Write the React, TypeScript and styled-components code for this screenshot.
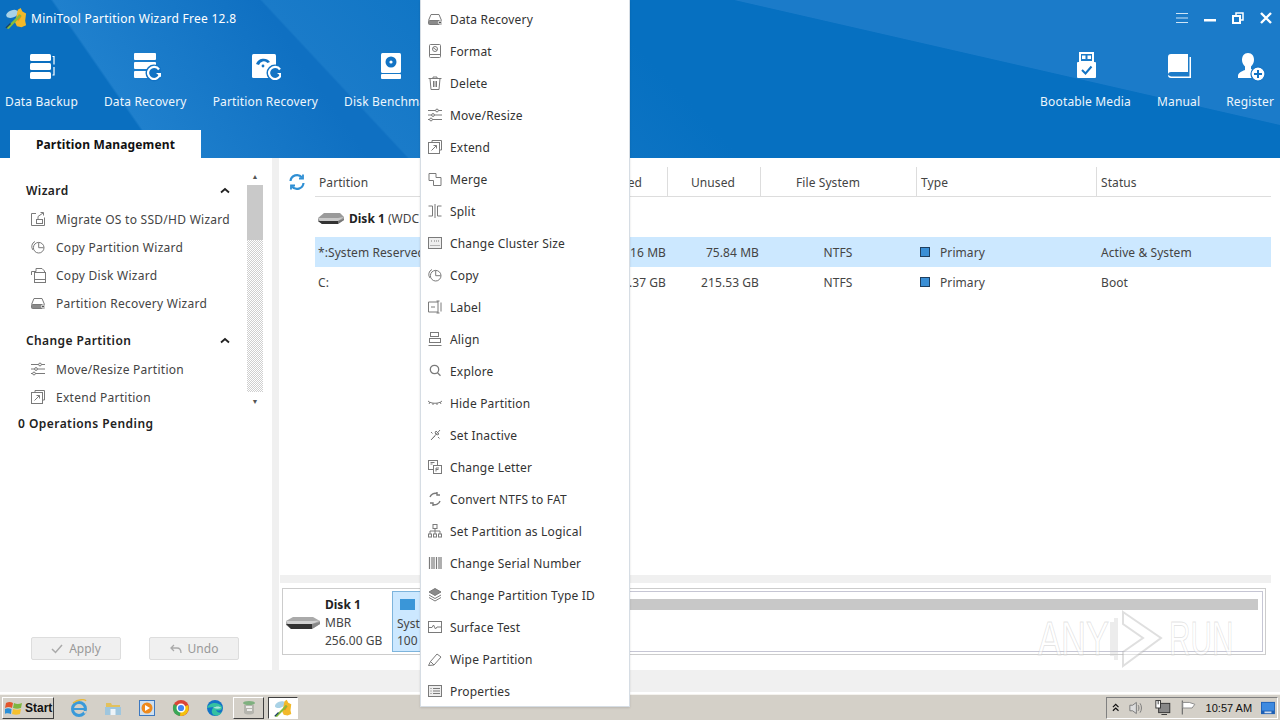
import React from "react";
import styled, { createGlobalStyle } from "styled-components";

const Global = createGlobalStyle`
  html, body { margin: 0; padding: 0; width: 1280px; height: 720px; overflow: hidden; background: #fff; }
  * { box-sizing: border-box; }
  body { font-family: "Noto Sans", "Open Sans", Arial, sans-serif; font-size: 12px; color: #333; }
`;

const Page = styled.div`
  position: relative;
  width: 1280px;
  height: 720px;
  display: flex;
  flex-direction: column;
  overflow: hidden;
`;
const Window = styled.div`
  height: 694px;
  display: flex;
  flex-direction: column;
  background: #fff;
`;
const Header = styled.header`
  height: 158px;
  display: flex;
  flex-direction: column;
  color: #fff;
  background:
    linear-gradient(12.9deg, transparent 72.2%, #1b7bc9 72.4%),
    linear-gradient(47deg, transparent 28.5%, #1a7bc9 28.7%, #0670c1 52%),
    linear-gradient(55.3deg, transparent 11.5%, #1f80cd 11.7%, #0f70c2 26.6%),
    #0a6fc0;
`;
const TitleBar = styled.div`
  height: 36px;
  display: flex;
  align-items: center;
  padding: 0 8px 0 5px;
`;
const AppTitle = styled.div`
  flex: 1;
  margin-left: 4px;
  font-size: 12px;
  letter-spacing: 0.27px;
`;
const WinControls = styled.div`
  display: flex;
  gap: 16px;
  align-items: center;
`;
const Tools = styled.div`
  flex: 1;
  display: flex;
  gap: 26px;
  padding: 0 6px 0 5px;
`;
const RightTools = styled.div`
  margin-left: auto;
  display: flex;
  gap: 26px;
`;
const Tool = styled.div`
  display: flex;
  flex-direction: column;
  align-items: center;
  padding-top: 14px;
  white-space: nowrap;
  font-size: 12px;
  letter-spacing: 0.16px;
  color: #eef6fc;
  svg { margin-bottom: 11px; display: block; }
`;
const TabRow = styled.div`
  height: 28px;
  padding-left: 10px;
`;
const Tab = styled.div`
  width: 191px;
  height: 28px;
  padding-top: 1px;
  background: #fff;
  color: #111;
  font-weight: 700;
  font-size: 12px;
  letter-spacing: 0.15px;
  display: flex;
  align-items: center;
  justify-content: center;
`;
const Body = styled.div`
  flex: 1;
  display: flex;
  min-height: 0;
`;
const Sidebar = styled.aside`
  width: 279px;
  border-right: 7px solid #f0f0f0;
  display: flex;
  flex-direction: column;
`;
const SideScroll = styled.div`
  height: 252px;
  display: flex;
  padding: 9px 9px 0 0;
`;
const SideContent = styled.div`
  flex: 1;
  padding: 13px 12px 0 26px;
`;
const SectionHead = styled.div`
  height: 20px;
  display: flex;
  align-items: center;
  justify-content: space-between;
  font-weight: 600;
  color: #222;
  font-size: 12px;
  letter-spacing: 0.4px;
  margin-bottom: 5px;
  &:not(:first-child) { margin-top: 13px; }
`;
const SideItem = styled.div`
  height: 28px;
  display: flex;
  align-items: center;
  gap: 10px;
  color: #444;
  padding-left: 4px;
  white-space: nowrap;
  letter-spacing: 0.27px;
`;
const ScrollBar = styled.div`
  width: 16px;
  display: flex;
  flex-direction: column;
  align-items: center;
`;
const ScrollBtn = styled.div`
  height: 18px;
  display: flex;
  align-items: center;
  justify-content: center;
  color: #555;
  font-size: 7px;
`;
const Track = styled.div`
  flex: 1;
  width: 16px;
  background: repeating-conic-gradient(#cfcfcf 0 25%, #fff 0 50%) 0 0 / 2px 2px;
`;
const Thumb = styled.div`
  height: 55px;
  background: #c9c9c9;
`;
const Pending = styled.div`
  padding-left: 18px;
  margin-top: 5px;
  font-weight: 600;
  color: #222;
  letter-spacing: 0.45px;
`;
const Actions = styled.div`
  margin-top: auto;
  display: flex;
  gap: 28px;
  padding: 0 0 10px 31px;
`;
const ActionBtn = styled.div`
  width: 90px;
  height: 23px;
  background: #f0f0f0;
  border: 1px solid #ddd;
  border-radius: 2px;
  color: #999;
  display: flex;
  align-items: center;
  justify-content: center;
  gap: 6px;
`;
const Main = styled.main`
  flex: 1;
  min-width: 0;
  display: flex;
  flex-direction: column;
`;
const TableArea = styled.div`
  flex: 1;
  display: flex;
  padding: 9px 9px 0 0;
`;
const RefreshCol = styled.div`
  width: 36px;
  padding: 6px 0 0 9px;
`;
const Table = styled.div`
  flex: 1;
  min-width: 0;
`;
const Row = styled.div<{ $selected?: boolean }>`
  display: grid;
  grid-template-columns: 150px 110px 93px 93px 156px 180px 1fr;
  height: 30px;
  padding-top: 1px;
  align-items: center;
  color: #444;
  letter-spacing: 0.08px;
  background: ${(p) => (p.$selected ? "#cce8ff" : "transparent")};
`;
const HeadRow = styled(Row)`
  height: 30px;
  padding-top: 0;
  border-bottom: 1px solid #ddd;
`;
const HeadCell = styled.div<{ $pl?: number; $pr?: number; $right?: boolean; $sep?: boolean }>`
  height: 100%;
  display: flex;
  align-items: center;
  justify-content: ${(p) => (p.$right ? "flex-end" : "flex-start")};
  padding: 2px ${(p) => p.$pr ?? 0}px 0 ${(p) => p.$pl ?? 0}px;
  border-right: ${(p) => (p.$sep ? "1px solid #ddd" : "none")};
  white-space: nowrap;
`;
const Cell = styled.div<{ $align?: string; $pl?: number }>`
  text-align: ${(p) => p.$align ?? "left"};
  padding: 0 2px 0 ${(p) => p.$pl ?? 0}px;
  white-space: nowrap;
`;
const TypeSwatch = styled.span`
  display: inline-block;
  width: 10px;
  height: 10px;
  background: #3a8fd6;
  border: 1px solid #1f3f5f;
  margin: 0 10px 0 0;
  vertical-align: 0;
`;
const DiskRow = styled.div`
  height: 40px;
  padding: 2px 0 0 3px;
  display: flex;
  align-items: center;
  gap: 5px;
  color: #444;
`;
const Strong = styled.span`
  font-weight: 700;
  color: #222;
`;
const MapBand = styled.div`
  height: 8px;
  margin: 0 9px 0 1px;
  background: #f0f0f0;
`;
const DiskMap = styled.div`
  height: 67px;
  margin: 5px 14px 15px 3px;
  border: 1px solid #ccc;
  display: flex;
  align-items: stretch;
  padding: 2px 2px 2px 0;
`;
const DiskInfo = styled.div`
  width: 109px;
  display: flex;
  align-items: center;
  padding: 3px 0 0 3px;
  gap: 5px;
  line-height: 18px;
  color: #444;
`;
const PartBlock = styled.div<{ $selected?: boolean }>`
  flex: ${(p) => (p.$selected ? "0 0 50px" : "1")};
  border: 1px solid ${(p) => (p.$selected ? "#7db4dc" : "#c6c6d4")};
  background: ${(p) => (p.$selected ? "#cce8ff" : "#fff")};
  padding: 7px 7px 0 4px;
  line-height: 17px;
  color: #444;
  overflow: hidden;
  white-space: nowrap;
`;
const PartBar = styled.div<{ $color: string; $w?: string }>`
  height: 11px;
  width: ${(p) => p.$w ?? "100%"};
  background: ${(p) => p.$color};
  margin: 0 0 5px 3px;
`;
const Footer = styled.div`
  height: 24px;
  background: #f0f0f0;
  border-bottom: 2px solid #fff;
`;
const Taskbar = styled.footer`
  height: 26px;
  background: #d4d0c8;
  border-top: 1px solid #f4f2ee;
  display: flex;
  align-items: center;
  padding: 0 2px;
`;
const StartBtn = styled.div`
  width: 52px;
  height: 22px;
  background: #d4d0c8;
  border: 1px solid;
  border-color: #fff #404040 #404040 #fff;
  display: flex;
  align-items: center;
  gap: 2px;
  padding-left: 2px;
  font-family: "Liberation Sans", Arial, sans-serif;
  font-weight: 700;
  font-size: 12px;
  color: #111;
`;
const QuickLaunch = styled.div`
  display: flex;
  align-items: center;
  margin-left: 8px;
`;
const TaskIcon = styled.div<{ $state?: "raised" | "active" }>`
  width: ${(p) => (p.$state === "raised" ? "31px" : p.$state === "active" ? "30px" : "34px")};
  height: 22px;
  display: flex;
  align-items: center;
  justify-content: center;
  margin-left: ${(p) => (p.$state === "raised" ? "1px" : p.$state === "active" ? "4px" : "0")};
  background: ${(p) => (p.$state === "active" ? "#fff" : "transparent")};
  border: ${(p) => (p.$state ? "1px solid" : "none")};
  border-color: ${(p) => (p.$state === "active" ? "#404040 #fff #fff #404040" : "#fff #404040 #404040 #fff")};
`;
const Tray = styled.div`
  margin-left: auto;
  width: 172px;
  height: 22px;
  border: 1px solid;
  border-color: #808080 #fff #fff #808080;
  display: flex;
  align-items: center;
  padding: 0 2px 0 5px;
  gap: 9px;
  font-family: "Liberation Sans", Arial, sans-serif;
  font-size: 11px;
  color: #111;
`;
const Clock = styled.span`
  margin-left: auto;
  white-space: nowrap;
`;
const Menu = styled.div`
  position: absolute;
  left: 420px;
  top: 0;
  width: 210px;
  height: 707px;
  padding-top: 3px;
  background: #fff;
  border: 1px solid #d6dde4;
  border-top: none;
  box-shadow: 0 1px 2px rgba(0, 0, 0, 0.12);
`;
const MenuItem = styled.div`
  height: 32px;
  display: flex;
  align-items: center;
  padding-left: 6px;
  gap: 7px;
  color: #333;
  white-space: nowrap;
  letter-spacing: 0.18px;
`;
const Watermark = styled.div`
  position: absolute;
  left: 1038px;
  top: 610px;
  display: flex;
  align-items: center;
  font-family: "Liberation Sans", Arial, sans-serif;
  font-size: 48px;
  line-height: 58px;
  color: rgba(255, 255, 255, 0.5);
  -webkit-text-stroke: 1px rgba(170, 170, 170, 0.32);
  pointer-events: none;
`;
const WmWord = styled.span<{ $w: number; $sx: number }>`
  display: block;
  width: ${(p) => p.$w}px;
  white-space: nowrap;
  transform: scaleX(${(p) => p.$sx});
  transform-origin: left center;
`;

const S = { fill: "none", stroke: "#7a7a7a", strokeWidth: 1 } as const;

const icons: Record<string, React.ReactNode> = {
  drive: <g {...S}><path d="M1.5 9.5 4 3.5h8l2.5 6" /><rect x="1.5" y="9.5" width="13" height="4" rx="1" fill="#8a8a8a" /><circle cx="13" cy="11.5" r="1.6" fill="#555" stroke="#fff" /></g>,
  format: <g {...S}><rect x="2.5" y="1.5" width="11" height="13" rx="1" /><circle cx="8" cy="6" r="2.5" /><path d="M6 4.5 10 7.5M2.5 11.5h11" /></g>,
  trash: <g {...S}><path d="M1.5 3.5h13M6 3.5V2h4v1.5M3 3.5l1 11h8l1-11M6.5 6v6M8 6v6M9.5 6v6" /></g>,
  sliders: <g {...S}><path d="M1 3.5h14M1 8h14M1 12.5h14" /><circle cx="10" cy="3.5" r="1.4" fill="#fff" /><circle cx="6" cy="8" r="1.4" fill="#fff" /><circle cx="4" cy="12.5" r="1.4" fill="#fff" /></g>,
  extend: <g {...S}><path d="M5 3.5V1.5h9.500v9.500H12.500" /><rect x="1.5" y="3.5" width="11" height="11" /><path d="M4.5 11.500 9.500 6.500M6.500 6.500h3v3" /></g>,
  merge: <g {...S}><path d="M2 2.5h7v4h5v8H6.500v-5H2z" /></g>,
  split: <g {...S}><path d="M8 1v14M1.500 3h4v10h-4M14.500 3h-4v10h4" /></g>,
  cluster: <g {...S}><rect x="1.5" y="2.5" width="13" height="11" fill="#eee" /><path d="M4 6h1M7 6h5M3.500 10.500h9" strokeDasharray="1 1" /></g>,
  copy: <g {...S}><path d="M5 2.500A5.500 5.500 0 0 0 3 11" /><circle cx="8.700" cy="8.700" r="5.300" /><path d="M8.700 3.500v5.200h5" /></g>,
  label: <g {...S}><path d="M11 3H1.500v10H11M4 8h4M11 2v12M9.500 2h3M9.500 14h3M14 3.500v9" /></g>,
  align: <g {...S}><path d="M1.500 14.500h13" /><rect x="3.500" y="1.500" width="8" height="4" /><rect x="2.500" y="7.500" width="11" height="4" /></g>,
  explore: <g {...S} strokeWidth={1.3}><circle cx="7.500" cy="6.500" r="4.200" /><path d="m10.500 9.800 3 3" /></g>,
  hide: <g {...S}><path d="M1 6c3 3 11 3 14 0M3 7 2 9M6 8v2M10 8v2M13 7l1 2" /></g>,
  inactive: <g {...S}><path d="m5 12 3-3M9 4l3 3-2 1-2-2zM4 5l1.500 1.500M11 10l1.500 1.500M4 13 13 3" /></g>,
  letter: <g {...S}><rect x="1.500" y="1.500" width="9" height="9" /><rect x="6.500" y="6.500" width="8" height="8" fill="#fff" /><path d="M3.500 3.500h4M3.500 5h2M9 9h3M9 9v3.500M9 10.500h2.500" /></g>,
  convert: <g {...S} strokeWidth={1.4}><path d="M3 6a5.500 5.500 0 0 1 7-3.500M13 10a5.500 5.500 0 0 1-7 3.500M10 1v3h3M6 15v-3H3" /></g>,
  logical: <g {...S}><rect x="6" y="1.500" width="4" height="4" /><path d="M8 5.500V8M3 11V8h10v3M8 8v3" /><rect x="1.500" y="11" width="3" height="3" /><rect x="6.500" y="11" width="3" height="3" /><rect x="11.500" y="11" width="3" height="3" /></g>,
  serial: <g {...S}><path d="M2.500 2v12M5 2v12M7 2v12M9.500 2v12M12 2v12M14 2v12" strokeWidth={1.2} /></g>,
  layers: <g {...S}><path d="M8 1.500 14 5l-6 3.500L2 5z" fill="#8a8a8a" /><path d="m2 8 6 3.500L14 8M2 10.500 8 14l6-3.500" /></g>,
  surface: <g {...S}><rect x="1.500" y="2.500" width="13" height="11" /><path d="M2 8.500h3l1.500-2.500 2 4 1.500-2h4" /></g>,
  wipe: <g {...S}><path d="m1.500 14.500 2-4L10 3l4 3-7 8z M3.500 10.500 7 14" /></g>,
  props: <g {...S}><rect x="1.500" y="2.500" width="13" height="11" fill="#eee" /><path d="M3.500 5.500h1M6 5.500h7M3.500 8h1M6 8h7M3.500 10.500h1M6 10.500h7" /></g>,
  migrate: <g {...S}><path d="M6 2.500H1.500v12h13v-8" /><rect x="6.500" y="8.500" width="6" height="4" /><path d="M8 8V5.500L13 2M10.500 1.500H13.500V4.500" /></g>,
  copydisk: <g {...S}><path d="M6 4.500V1.500h6l2.500 2.500v4M1.500 8V4.500H6" /><rect x="4.500" y="5.500" width="11" height="10" fill="#fff" /><path d="M4.500 12.500h11" /></g>,
};

const Ico = ({ n, w = 16 }: { n: string; w?: number }) => (
  <svg width={w} height={16} viewBox="0 0 16 16" style={{ flex: "none" }}>{icons[n]}</svg>
);

const W = "#fff";
const B = "#1273c4";

const BigIcon = ({ children }: { children: React.ReactNode }) => (
  <svg width="32" height="32" viewBox="0 0 32 32">{children}</svg>
);

const refreshC = (cx: number, cy: number) => (
  <g>
    <circle cx={cx} cy={cy} r="8.500" fill={B} />
    <path d={`M${cx + 5} ${cy - 3.5}A6 6 0 1 0 ${cx + 6} ${cy + 1}`} fill="none" stroke={W} strokeWidth="2.200" />
    <path d={`M${cx + 2} ${cy}h6v5z`} fill={W} />
  </g>
);

const BackupIcon = () => (
  <BigIcon>
    <rect x="5" y="4" width="21" height="7" rx="1.500" fill={W} />
    <rect x="5" y="13" width="21" height="7" rx="1.500" fill={W} />
    <rect x="5" y="22" width="21" height="7" rx="1.500" fill={W} />
    <path d="M27.500 6.500h1.500v8M29 17v8h-1.500" stroke={W} fill="none" strokeWidth="1.200" />
  </BigIcon>
);
const RecoveryIcon = () => (
  <BigIcon>
    <rect x="5" y="3" width="22" height="7" rx="1" fill={W} />
    <rect x="5" y="12" width="22" height="7" rx="1" fill={W} />
    <rect x="5" y="21" width="14" height="7" rx="1" fill={W} />
    {refreshC(25, 23)}
  </BigIcon>
);
const PartRecIcon = () => (
  <BigIcon>
    <rect x="3" y="4" width="24" height="24" rx="1.500" fill={W} />
    <path d="M7 14a8 8 0 0 1 14-2l-2.500 1a5 5 0 0 0-8.500 2z" fill={B} />
    <circle cx="14" cy="16" r="1.400" fill={B} />
    {refreshC(26, 23)}
  </BigIcon>
);
const BenchIcon = () => (
  <BigIcon>
    <rect x="6" y="3" width="20" height="20" rx="1.500" fill={W} />
    <rect x="6" y="24" width="20" height="5" rx="1" fill={W} />
    <circle cx="16" cy="12" r="5.500" fill={B} />
    <circle cx="16" cy="12" r="1.600" fill={W} />
  </BigIcon>
);
const UsbIcon = () => (
  <BigIcon>
    <path d="M10 3h13v9H10z" fill="none" stroke={W} strokeWidth="2" />
    <rect x="12" y="5.500" width="3.500" height="3.500" fill={W} />
    <rect x="17.500" y="5.500" width="3.500" height="3.500" fill={W} />
    <rect x="7" y="12" width="19" height="16" rx="1" fill={W} />
    <path d="m12 20 3.500 3.500 6-7" fill="none" stroke={B} strokeWidth="2" />
  </BigIcon>
);
const BookIcon = () => (
  <BigIcon>
    <path d="M5 7a3 3 0 0 1 3-3h17v18H8a3 3 0 0 0-3 3z" fill={W} />
    <path d="M5 25a3 3 0 0 0 3 3h20V7h-1.500v19.500H8" fill={W} />
  </BigIcon>
);
const RegisterIcon = () => (
  <BigIcon>
    <path d="M14 3c4 0 6 3 6 7 0 3-1.500 5-3 6.500V19l5 2.500V28H4v-2c0-3 3-4.500 7-6v-3.500C9.500 15 8 13 8 10c0-4 2-7 6-7z" fill={W} />
    <circle cx="24" cy="24" r="7" fill={W} stroke={B} strokeWidth="1.200" />
    <path d="M24 20v8M20 24h8" stroke={B} strokeWidth="2" />
  </BigIcon>
);

const Wand = ({ s = 24 }: { s?: number }) => (
  <svg width={s} height={s} viewBox="0 0 24 24">
    <ellipse cx="8" cy="7.500" rx="7" ry="4" fill="#a9d2e6" transform="rotate(-20 8 7.500)" />
    <path d="M14 3l3-2 2 4 4 2-1 8 1 5-5 2-5-1-2-4z" fill="#f2b92a" />
    <path d="M15 8l3 2-3 5-3-1z" fill="#e98b1b" />
    <path d="M1 23 16 8l2 1.500L4 24z" fill="#86bd3c" />
    <path d="M1 23l5-5" stroke="#1d3f63" strokeWidth="1.500" />
  </svg>
);

const HddSmall = () => (
  <svg width="26" height="13" viewBox="0 0 26 13">
    <path d="M0 6 6 1h16l4 4v3l-6 4H4L0 9z" fill="#9a9a9a" />
    <path d="M0 6h20l6-1-6 4H2z" fill="#c9c9c9" />
    <path d="M0 9h20v3H4z" fill="#333" />
    <path d="M20 9l6-2v1l-6 4z" fill="#777" />
  </svg>
);
const HddLarge = () => (
  <svg width="34" height="14" viewBox="0 0 34 14">
    <path d="M0 5 7 1h20l7 4v3l-8 5H5L0 9z" fill="#aaa" />
    <path d="M0 5h27l7-.5-8 3.500H2z" fill="#d2d2d2" />
    <path d="M0 8h26v5H5z" fill="#333" />
    <path d="M26 8l8-2v2l-8 5z" fill="#888" />
  </svg>
);

const Refresh = () => (
  <svg width="18" height="18" viewBox="0 0 18 18" fill="none" stroke="#2f8fd4" strokeWidth="2.200">
    <path d="M2.500 8A6.500 6.500 0 0 1 14 4.500" />
    <path d="M15.500 10A6.500 6.500 0 0 1 4 13.500" />
    <path d="M15 1.500v4h-4M3 16.500v-4h4" strokeWidth="1.800" />
  </svg>
);

const Chevron = () => (
  <svg width="10" height="7" viewBox="0 0 10 7" style={{ marginRight: 5 }}>
    <path d="M1 5.500 5 2l4 3.500" fill="none" stroke="#222" strokeWidth="1.800" />
  </svg>
);

const WinFlag = () => (
  <svg width="18" height="16" viewBox="0 0 18 16">
    <path d="M1 3c3-1.500 5-1 7 0l-1 5c-2-1-4-1.500-7 0z" fill="#e2552c" />
    <path d="M9 3c3 1.500 5 1 8 0l-1 5c-3 1-5 1-8 0z" fill="#7db640" />
    <path d="M0 9c2-1 4-1 6.500 0L6 14c-2-1-4-1-7 0z" fill="#2a8fd8" />
    <path d="M8 9c3 1 5 1 8 0l-1 5c-3 1-5 1-8 0z" fill="#f5c02c" />
  </svg>
);
const IeIcon = () => (
  <svg width="18" height="18" viewBox="0 0 18 18">
    <circle cx="9" cy="10" r="6.500" fill="none" stroke="#3a9ad9" strokeWidth="3" />
    <path d="M4 10h10" stroke="#3a9ad9" strokeWidth="2" />
    <path d="M13 12h4l-2 3z" fill="#d4d0c8" />
    <path d="M3 4c5-4 12-4 13-2" fill="none" stroke="#e8b83a" strokeWidth="1.400" />
  </svg>
);
const FolderIcon = () => (
  <svg width="18" height="18" viewBox="0 0 18 18">
    <path d="M2 4h5l1 2h8v3H2z" fill="#e3c15c" />
    <path d="M1 8h16v8H1z" fill="#9fc6de" />
    <rect x="6.500" y="10" width="5" height="6" fill="#eef4f8" />
  </svg>
);
const PlayerIcon = () => (
  <svg width="18" height="18" viewBox="0 0 18 18">
    <rect x="1.500" y="1.500" width="15" height="15" fill="#cfe0f0" stroke="#3c78c0" />
    <circle cx="9" cy="9" r="5.500" fill="#ef8a1c" />
    <path d="M7 6l5 3-5 3z" fill="#fff" />
  </svg>
);
const ChromeIcon = () => (
  <svg width="18" height="18" viewBox="0 0 18 18">
    <circle cx="9" cy="9" r="8" fill="#db4437" />
    <path d="M9 9 2 5A8 8 0 0 0 8 17z" fill="#3aa757" />
    <path d="M9 9l7-3A8 8 0 0 1 8 17z" fill="#f4c20d" />
    <circle cx="9" cy="9" r="3.800" fill="#4285f4" stroke="#fff" strokeWidth="1.400" />
  </svg>
);
const EdgeIcon = () => (
  <svg width="18" height="18" viewBox="0 0 18 18">
    <circle cx="9" cy="9" r="8" fill="#1373c6" />
    <path d="M1 9C3 3 13 2 16 8c1 3-3 4-6 3 1 2 4 4 6 2-2 4-6 4-8 3-3-1-3-6 0-8-3 0-6 1-7 1z" fill="#35c1a1" />
    <path d="M7 9c3-2 7-2 8 0-2 1-5 1-7 0z" fill="#fff" opacity=".6" />
  </svg>
);
const ThreeIcon = () => (
  <svg width="18" height="18" viewBox="0 0 18 18">
    <ellipse cx="9" cy="4" rx="6" ry="2" fill="#7fb07f" />
    <path d="M4 6h10v8c-2 2-8 2-10 0z" fill="#b5b5ae" />
    <path d="M6 8h6M7 11h5" stroke="#fff" strokeWidth="1.600" />
  </svg>
);
const Speaker = () => (
  <svg width="18" height="16" viewBox="0 0 18 16" fill="none" stroke="#777">
    <path d="M5 5H2v6h3l4 3V2z" fill="#ddd" />
    <path d="M11 5c1 2 1 4 0 6M13 3c2 3 2 7 0 10" />
  </svg>
);
const NetIcon = () => (
  <svg width="18" height="18" viewBox="0 0 18 18">
    <rect x="5" y="4" width="12" height="10" fill="#888" stroke="#333" />
    <path d="M8 16h6" stroke="#333" />
    <rect x="2" y="1" width="5" height="8" fill="#fff" stroke="#333" />
    <path d="M4.500 1v4" stroke="#333" />
  </svg>
);
const FlagIcon = () => (
  <svg width="18" height="18" viewBox="0 0 18 18">
    <path d="M2.500 1v15" stroke="#666" strokeWidth="1.200" />
    <path d="M3 3h7l6 2-3 4H3z" fill="#fff" stroke="#888" />
  </svg>
);
const DeskIcon = () => (
  <svg width="15" height="14" viewBox="0 0 16 14">
    <rect width="16" height="14" fill="#1d5fb4" />
    <rect x="1" y="1" width="14" height="9" fill="#3d8ae0" />
    <rect x="4" y="11" width="8" height="2" fill="#cfdcee" />
  </svg>
);
const PlayMark = () => (
  <svg width="62" height="58" viewBox="0 0 62 58" fill="none" stroke="rgba(170,170,170,.38)" strokeWidth="2">
    <path d="M5 12v34M9 8v42" strokeWidth="4" stroke="rgba(200,200,200,.35)" />
    <path d="M16 2 54 28 16 56V42L36 28 16 14z" fill="rgba(255,255,255,.45)" />
  </svg>
);

const menuItems: [string, string][] = [
  ["drive", "Data Recovery"], ["format", "Format"], ["trash", "Delete"], ["sliders", "Move/Resize"],
  ["extend", "Extend"], ["merge", "Merge"], ["split", "Split"], ["cluster", "Change Cluster Size"],
  ["copy", "Copy"], ["label", "Label"], ["align", "Align"], ["explore", "Explore"],
  ["hide", "Hide Partition"], ["inactive", "Set Inactive"], ["letter", "Change Letter"],
  ["convert", "Convert NTFS to FAT"], ["logical", "Set Partition as Logical"], ["serial", "Change Serial Number"],
  ["layers", "Change Partition Type ID"], ["surface", "Surface Test"], ["wipe", "Wipe Partition"], ["props", "Properties"],
];

export default function App() {
  return (
    <Page>
      <Global />
      <Window>
        <Header>
          <TitleBar>
            <Wand s={22} />
            <AppTitle>MiniTool Partition Wizard Free 12.8</AppTitle>
            <WinControls>
              <svg width="12" height="12" viewBox="0 0 12 12" stroke="#cfe4f5"><path d="M0 1.500h12M0 6h12M0 10.500h12" /></svg>
              <svg width="12" height="12" viewBox="0 0 12 12" fill="#fff"><rect y="7" width="12" height="2.500" /></svg>
              <svg width="12" height="12" viewBox="0 0 12 12" fill="none" stroke="#fff" strokeWidth="2"><rect x="1" y="4" width="7" height="7" /><path d="M4 3V1h7v7H9" strokeWidth="1.500" /></svg>
              <svg width="12" height="12" viewBox="0 0 12 12" stroke="#fff" strokeWidth="2.400"><path d="m1 1 10 10M11 1 1 11" /></svg>
            </WinControls>
          </TitleBar>
          <Tools>
            <Tool><BackupIcon />Data Backup</Tool>
            <Tool><RecoveryIcon />Data Recovery</Tool>
            <Tool><PartRecIcon />Partition Recovery</Tool>
            <Tool><BenchIcon />Disk Benchmark</Tool>
            <RightTools>
              <Tool><UsbIcon />Bootable Media</Tool>
              <Tool><BookIcon />Manual</Tool>
              <Tool><RegisterIcon />Register</Tool>
            </RightTools>
          </Tools>
          <TabRow><Tab>Partition Management</Tab></TabRow>
        </Header>
        <Body>
          <Sidebar>
            <SideScroll>
              <SideContent>
                <SectionHead>Wizard<Chevron /></SectionHead>
                <SideItem><Ico n="migrate" />Migrate OS to SSD/HD Wizard</SideItem>
                <SideItem><Ico n="copy" />Copy Partition Wizard</SideItem>
                <SideItem><Ico n="copydisk" />Copy Disk Wizard</SideItem>
                <SideItem><Ico n="drive" />Partition Recovery Wizard</SideItem>
                <SectionHead>Change Partition<Chevron /></SectionHead>
                <SideItem><Ico n="sliders" />Move/Resize Partition</SideItem>
                <SideItem><Ico n="extend" />Extend Partition</SideItem>
              </SideContent>
              <ScrollBar>
                <ScrollBtn>▲</ScrollBtn>
                <Track><Thumb /></Track>
                <ScrollBtn>▼</ScrollBtn>
              </ScrollBar>
            </SideScroll>
            <Pending>0 Operations Pending</Pending>
            <Actions>
              <ActionBtn>
                <svg width="12" height="10" viewBox="0 0 12 10" fill="none" stroke="#aaa" strokeWidth="1.500"><path d="m1 5 3.500 3.500L11 1" /></svg>
                Apply
              </ActionBtn>
              <ActionBtn>
                <svg width="12" height="10" viewBox="0 0 12 10" fill="none" stroke="#aaa" strokeWidth="1.300"><path d="M4 1 1 4l3 3M1 4h6c3 0 4 2 4 5" /></svg>
                Undo
              </ActionBtn>
            </Actions>
          </Sidebar>
          <Main>
            <TableArea>
              <RefreshCol><Refresh /></RefreshCol>
              <Table>
                <HeadRow>
                  <HeadCell $pl={4}>Partition</HeadCell>
                  <HeadCell />
                  <HeadCell $right $pr={25} $sep>Used</HeadCell>
                  <HeadCell $right $pr={25} $sep>Unused</HeadCell>
                  <HeadCell $pl={35} $sep>File System</HeadCell>
                  <HeadCell $pl={4} $sep>Type</HeadCell>
                  <HeadCell $pl={4}>Status</HeadCell>
                </HeadRow>
                <DiskRow>
                  <HddSmall />
                  <span><Strong>Disk 1</Strong> (WDC</span>
                </DiskRow>
                <Row $selected>
                  <Cell $pl={3}>*:System Reserved</Cell>
                  <Cell />
                  <Cell $align="right">24.16 MB</Cell>
                  <Cell $align="right">75.84 MB</Cell>
                  <Cell $align="center">NTFS</Cell>
                  <Cell $pl={3}><TypeSwatch />Primary</Cell>
                  <Cell $pl={4}>Active &amp; System</Cell>
                </Row>
                <Row>
                  <Cell $pl={3}>C:</Cell>
                  <Cell />
                  <Cell $align="right">40.37 GB</Cell>
                  <Cell $align="right">215.53 GB</Cell>
                  <Cell $align="center">NTFS</Cell>
                  <Cell $pl={3}><TypeSwatch />Primary</Cell>
                  <Cell $pl={4}>Boot</Cell>
                </Row>
              </Table>
            </TableArea>
            <MapBand />
            <DiskMap>
              <DiskInfo>
                <HddLarge />
                <div><Strong>Disk 1</Strong><br />MBR<br />256.00 GB</div>
              </DiskInfo>
              <PartBlock $selected>
                <PartBar $color="#3a96d8" $w="15px" />
                System<br />100 MB
              </PartBlock>
              <PartBlock>
                <PartBar $color="#c8c8c8" />
              </PartBlock>
            </DiskMap>
          </Main>
        </Body>
        <Footer />
      </Window>
      <Taskbar>
        <StartBtn><WinFlag />Start</StartBtn>
        <QuickLaunch>
          <TaskIcon><IeIcon /></TaskIcon>
          <TaskIcon><FolderIcon /></TaskIcon>
          <TaskIcon><PlayerIcon /></TaskIcon>
          <TaskIcon><ChromeIcon /></TaskIcon>
          <TaskIcon><EdgeIcon /></TaskIcon>
          <TaskIcon $state="raised"><ThreeIcon /></TaskIcon>
          <TaskIcon $state="active"><Wand s={18} /></TaskIcon>
        </QuickLaunch>
        <Tray>
          <svg width="8" height="10" viewBox="0 0 8 10" fill="none" stroke="#111" strokeWidth="1.300"><path d="m1 4 3-3 3 3M1 8l3-3 3 3" /></svg>
          <Speaker />
          <NetIcon />
          <FlagIcon />
          <Clock>10:57 AM</Clock>
          <DeskIcon />
        </Tray>
      </Taskbar>
      <Menu>
        {menuItems.map(([n, label]) => (
          <MenuItem key={label}><Ico n={n} />{label}</MenuItem>
        ))}
      </Menu>
      <Watermark>
        <WmWord $w={69} $sx={0.72}>ANY</WmWord>
        <PlayMark />
        <WmWord $w={63} $sx={0.62}>RUN</WmWord>
      </Watermark>
    </Page>
  );
}
